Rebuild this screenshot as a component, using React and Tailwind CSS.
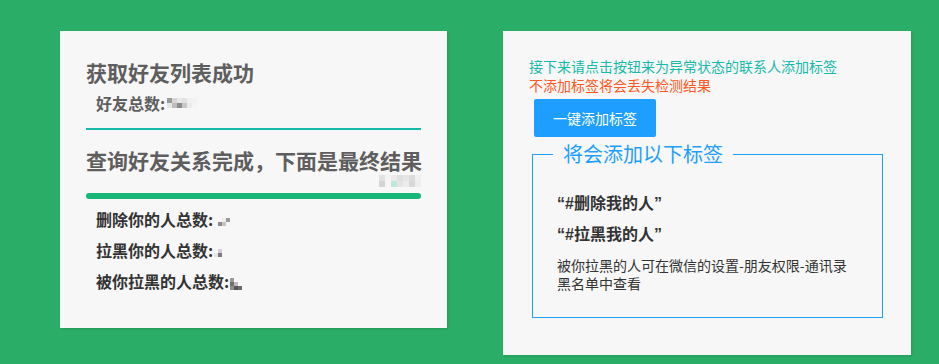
import React from 'react';

const font = { fontFamily: '"Noto Sans CJK SC", "Noto Sans", sans-serif' };
const latinFirst = { fontFamily: '"Liberation Sans", "Noto Sans CJK SC", sans-serif' };

// blurred count placeholder, drawn as a small mosaic
function Mosaic({ cells, cols, size = 4 }) {
  return (
    <span className="inline-grid align-middle" style={{ gridTemplateColumns: `repeat(${cols}, ${size}px)`, gridAutoRows: `${size}px` }}>
      {cells.map((c, i) => <span key={i} style={{ background: c }} />)}
    </span>
  );
}

export default function App() {
  return (
    <div className="w-[939px] h-[364px] bg-[#2aad67] flex items-start gap-[56px] pl-[60px] pt-[31px] overflow-hidden" style={font}>
      {/* left: result summary */}
      <div className="w-[387px] h-[297px] bg-[#f7f7f7] shadow-[1px_1px_2px_rgba(0,0,0,0.12)] px-[26px] pt-[27px]">
        <h2 className="text-[21px] leading-[28px] font-bold text-[#5e5e5e]">获取好友列表成功</h2>
        <div className="mt-[6px] ml-[10px] text-[16px] leading-[22px] font-bold text-[#5e5e5e] flex items-center gap-[2px]">
          <span>好友总数:</span>
          <Mosaic cols={6} size={5} cells={['#9a9a9a', '#d6d6d6', '#e8e8e8', '#e2e2e2', '#f0f0f0', '#f2f2f2', '#e6e6e6', '#bdbdbd', '#8c8c8c', '#c8c8c8', '#ececec', '#f4f4f4']} />
        </div>
        <div className="mt-[14px] h-[2px] bg-[#16baaa]" />
        <h2 className="mt-[16px] text-[21px] leading-[28px] font-bold text-[#5e5e5e] whitespace-nowrap">查询好友关系完成，下面是最终结果</h2>
        <div className="flex justify-end mt-[1px]">
          <Mosaic cols={7} size={6} cells={['#e2e2e2', '#f4f4f4', '#ebebeb', '#e0e0e0', '#e6e6e6', '#dcdcdc', '#f0f0f0', '#d4d4d4', '#f6f6f6', '#bfe8d6', '#e4e4e4', '#ececec', '#d8d8d8', '#eeeeee']} />
        </div>
        <div className="mt-[6px] h-[6px] rounded-full bg-[#16b777]" />
        <div className="mt-[5px] ml-[10px] text-[16px] leading-[31px] font-bold text-[#333]">
          <div className="flex items-center">删除你的人总数:<span className="ml-[5px]"><Mosaic cols={3} size={4} cells={['#f7f7f7', '#eeeeee', '#9a9a9a', '#8a8a8a', '#c4c4c4', '#f7f7f7']} /></span></div>
          <div className="flex items-center">拉黑你的人总数:<span className="ml-[1px]"><Mosaic cols={3} size={4} cells={['#f7f7f7', '#d0d0d0', '#f7f7f7', '#e6e6e6', '#7a7a7a', '#f7f7f7']} /></span></div>
          <div className="flex items-center">被你拉黑的人总数:<span className="ml-[1px]"><Mosaic cols={3} size={4} cells={['#9a9a9a', '#f7f7f7', '#f7f7f7', '#6f6f6f', '#bdbdbd', '#f7f7f7', '#8d8d8d', '#555555', '#6a6a6a']} /></span></div>
        </div>
      </div>

      {/* right: add tags */}
      <div className="w-[408px] h-[324px] bg-[#f7f7f7] shadow-[1px_1px_2px_rgba(0,0,0,0.12)] pl-[26px] pt-[26px]">
        <p className="text-[14px] leading-[19px] text-[#16baaa]">接下来请点击按钮来为异常状态的联系人添加标签</p>
        <p className="text-[14px] leading-[19px] text-[#ff5722]">不添加标签将会丢失检测结果</p>
        <button className="mt-[4px] ml-[5px] w-[122px] h-[38px] rounded-[2px] bg-[#1e9fff] text-white text-[14px]">一键添加标签</button>
        <fieldset className="mt-[3px] ml-[3px] w-[351px] border border-[#1e9fff] pb-[25px] pt-[20px]">
          <legend className="ml-[20px] px-[10px] text-[20px] leading-[28px] font-normal text-[#1e9fff]">将会添加以下标签</legend>
          <div className="pl-[24px]">
            <div className="text-[16px] leading-[31px] font-bold text-[#333]" style={latinFirst}>“#删除我的人”</div>
            <div className="text-[16px] leading-[31px] font-bold text-[#333]" style={latinFirst}>“#拉黑我的人”</div>
            <p className="mt-[6px] w-[296px] text-[14px] leading-[18px] text-[#333]">被你拉黑的人可在微信的设置-朋友权限-通讯录黑名单中查看</p>
          </div>
        </fieldset>
      </div>
    </div>
  );
}
